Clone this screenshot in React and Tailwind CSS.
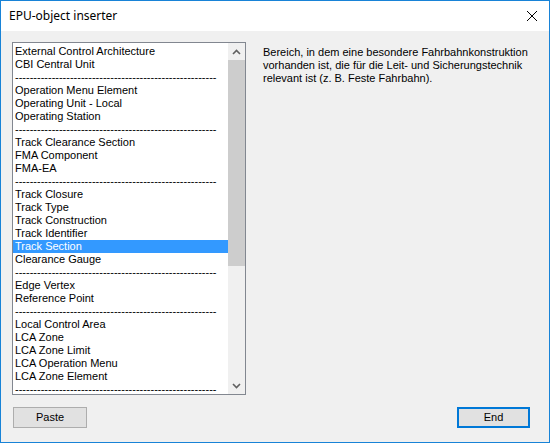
import React from "react";

const DASH = "-".repeat(55);
const items = [
  "External Control Architecture",
  "CBI Central Unit",
  DASH,
  "Operation Menu Element",
  "Operating Unit - Local",
  "Operating Station",
  DASH,
  "Track Clearance Section",
  "FMA Component",
  "FMA-EA",
  DASH,
  "Track Closure",
  "Track Type",
  "Track Construction",
  "Track Identifier",
  "Track Section",
  "Clearance Gauge",
  DASH,
  "Edge Vertex",
  "Reference Point",
  DASH,
  "Local Control Area",
  "LCA Zone",
  "LCA Zone Limit",
  "LCA Operation Menu",
  "LCA Zone Element",
  DASH,
];

export default function App() {
  return (
    <div
      className="w-[550px] h-[443px] border border-[#1883d7] flex flex-col bg-[#f0f0f0] text-black overflow-hidden"
      style={{ fontFamily: '"Liberation Sans", Arial, sans-serif' }}
    >
      {/* Title bar */}
      <div className="h-[30px] bg-white flex items-center justify-between pl-[8px] pr-[10px]">
        <span
          className="text-[12px] leading-none"
          style={{ fontFamily: '"Noto Sans", "Open Sans", sans-serif' }}
        >
          EPU-object inserter
        </span>
        <svg width="12" height="12" viewBox="0 0 12 12" className="mr-[1px]">
          <path d="M1 1 L11 11 M11 1 L1 11" stroke="#000" strokeWidth="1" fill="none" />
        </svg>
      </div>

      {/* Content */}
      <div className="flex-1 flex flex-col pl-[11px] pt-[11px] pr-[19px]">
        <div className="flex">
          {/* Listbox */}
          <div className="w-[234px] h-[353px] border border-[#828790] bg-white flex overflow-hidden shrink-0">
            <div className="flex-1 pt-[2px] overflow-hidden text-[11px]">
              {items.map((t, i) => (
                <div
                  key={i}
                  className={
                    "h-[13px] leading-[13px] pl-[2px] whitespace-nowrap overflow-hidden " +
                    (t === "Track Section" ? "bg-[#3399ff] text-white" : "")
                  }
                >
                  {t}
                </div>
              ))}
            </div>
            {/* Scrollbar */}
            <div className="w-[17px] bg-[#f0f0f0] flex flex-col shrink-0">
              <div className="h-[17px] flex items-center justify-center">
                <svg width="9" height="6" viewBox="0 0 9 6">
                  <path d="M1 5 L4.5 1.5 L8 5" stroke="#606060" strokeWidth="1.6" fill="none" />
                </svg>
              </div>
              <div className="h-[206px] bg-[#cdcdcd]" />
              <div className="flex-1" />
              <div className="h-[17px] flex items-center justify-center">
                <svg width="9" height="6" viewBox="0 0 9 6">
                  <path d="M1 1 L4.5 4.5 L8 1" stroke="#606060" strokeWidth="1.6" fill="none" />
                </svg>
              </div>
            </div>
          </div>

          {/* Description */}
          <div className="ml-[17px] mt-[4px] text-[11px] leading-[13px] whitespace-nowrap">
            <div>Bereich, in dem eine besondere Fahrbahnkonstruktion</div>
            <div>vorhanden ist, die für die Leit- und Sicherungstechnik</div>
            <div>relevant ist (z. B. Feste Fahrbahn).</div>
          </div>
        </div>

        {/* Buttons */}
        <div className="flex justify-between mt-[12px] pl-[1px]">
          <button className="w-[74px] h-[21px] border border-[#adadad] bg-[#e1e1e1] text-[11px] leading-none">
            Paste
          </button>
          <button className="w-[73px] h-[21px] border-2 border-[#0078d7] bg-[#e1e1e1] text-[11px] leading-none">
            End
          </button>
        </div>
      </div>
    </div>
  );
}
